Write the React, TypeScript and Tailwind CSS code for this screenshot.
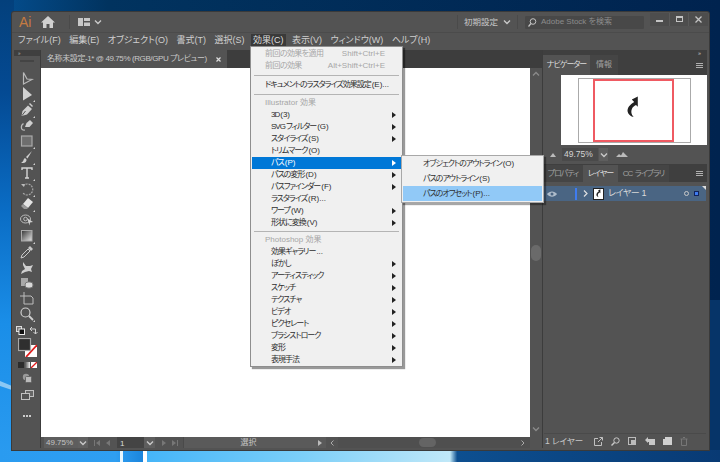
import type { ReactNode } from 'react';

const jp = 'font-["Liberation_Sans","Noto_Sans_CJK_JP",sans-serif] [font-feature-settings:"palt"]';

type MenuRow =
  | { kind: 'sep'; h: string }
  | { kind: 'head'; label: string }
  | { kind: 'dim'; label: string; right: string }
  | { kind: 'item'; label: string; sub?: boolean; on?: boolean; indent?: boolean };

const effectMenu: MenuRow[] = [
  { kind: 'dim', label: '前回の効果を適用', right: 'Shift+Ctrl+E' },
  { kind: 'dim', label: '前回の効果', right: 'Alt+Shift+Ctrl+E' },
  { kind: 'sep', h: 'h-[7px]' },
  { kind: 'item', label: 'ドキュメントのラスタライズ効果設定(E)...' },
  { kind: 'sep', h: 'h-[6px]' },
  { kind: 'head', label: 'Illustrator 効果' },
  { kind: 'item', indent: true, sub: true, label: '3D(3)' },
  { kind: 'item', indent: true, sub: true, label: 'SVG フィルター(G)' },
  { kind: 'item', indent: true, sub: true, label: 'スタイライズ(S)' },
  { kind: 'item', indent: true, label: 'トリムマーク(O)' },
  { kind: 'item', indent: true, sub: true, on: true, label: 'パス(P)' },
  { kind: 'item', indent: true, sub: true, label: 'パスの変形(D)' },
  { kind: 'item', indent: true, sub: true, label: 'パスファインダー(F)' },
  { kind: 'item', indent: true, label: 'ラスタライズ(R)...' },
  { kind: 'item', indent: true, sub: true, label: 'ワープ(W)' },
  { kind: 'item', indent: true, sub: true, label: '形状に変換(V)' },
  { kind: 'sep', h: 'h-[5px]' },
  { kind: 'head', label: 'Photoshop 効果' },
  { kind: 'item', indent: true, label: '効果ギャラリー...' },
  { kind: 'item', indent: true, sub: true, label: 'ぼかし' },
  { kind: 'item', indent: true, sub: true, label: 'アーティスティック' },
  { kind: 'item', indent: true, sub: true, label: 'スケッチ' },
  { kind: 'item', indent: true, sub: true, label: 'テクスチャ' },
  { kind: 'item', indent: true, sub: true, label: 'ビデオ' },
  { kind: 'item', indent: true, sub: true, label: 'ピクセレート' },
  { kind: 'item', indent: true, sub: true, label: 'ブラシストローク' },
  { kind: 'item', indent: true, sub: true, label: '変形' },
  { kind: 'item', indent: true, sub: true, label: '表現手法' },
];

const menuBar = ['ファイル(F)', '編集(E)', 'オブジェクト(O)', '書式(T)', '選択(S)', '効果(C)', '表示(V)', 'ウィンドウ(W)', 'ヘルプ(H)'];

// kana run tight, the "(X)..." suffix keeps normal spacing
function MenuLabel({ text }: { text: string }) {
  const m = text.match(/^(.*?)((?:\([^)]*\))?(?:\.\.\.)?)$/);
  return (
    <span>
      <span className="tracking-[-1px]">{m ? m[1] : text}</span>
      {m && m[2] ? <span className="ml-[1px]">{m[2]}</span> : null}
    </span>
  );
}

function Glyph({ children, w = 16, h = 16 }: { children: ReactNode; w?: number; h?: number }) {
  return (
    <svg width={w} height={h} viewBox={`0 0 ${w} ${h}`} fill="none" className="block shrink-0">
      {children}
    </svg>
  );
}

function Chevron({ color = '#c8c8c8' }: { color?: string }) {
  return (
    <Glyph w={8} h={6}>
      <path d="M1 1.500 4 4.500 7 1.500" stroke={color} strokeWidth="1.400" />
    </Glyph>
  );
}

const flyout = <path d="M16 14v2h-2z" fill="#d0d0d0" />;

const toolIcons: { h: string; icon: ReactNode }[] = [
  { h: 'h-[16px]', icon: <path d="M4.500 2.500V14L13 9.500 8 9z" stroke="#b8b8b8" strokeWidth="1.200" /> },
  { h: 'h-[16px]', icon: <g><path d="M4 1v13.500L13 9z" fill="#d2d2d2" />{flyout}</g> },
  { h: 'h-[15px]', icon: <g><path d="M2.500 14l1-5L9 3.500l4 3.500-5 5.500z" fill="#cfcfcf" /><path d="M3 13.500 6.500 9" stroke="#535353" /><path d="M10 2l1-1 3 3-1 1z" fill="#cfcfcf" />{flyout}</g> },
  { h: 'h-[16px]', icon: <g><path d="M6 10l1.500-4L11 3l3 3-3.500 4z" fill="#cfcfcf" /><path d="M6 13C2 14 1 9 4.500 6.500" stroke="#bbb" strokeWidth="1.200" /></g> },
  { h: 'h-[16px]', icon: <g><rect x="2.500" y="3" width="10.500" height="10" fill="#6e6e6e" stroke="#a8a8a8" strokeWidth="1.200" />{flyout}</g> },
  { h: 'h-[16px]', icon: <g><path d="M13 2 7 8l1.500 1.500z" fill="#d0d0d0" /><path d="M6 9C4 10 5 13 2 13.500 5 15 8 13 7.500 10.500z" fill="#d0d0d0" />{flyout}</g> },
  { h: 'h-[16px]', icon: <g><path d="M3 5V3h10v2M8 3v10M6 13h4" stroke="#d4d4d4" strokeWidth="1.400" />{flyout}</g> },
  { h: 'h-[15px]', icon: <g><path d="M4 5a5.500 5.500 0 1 1 0 7" stroke="#a8a8a8" strokeWidth="1.200" strokeDasharray="2 1" /><path d="M2 3l4 0-1 3z" fill="#bbb" />{flyout}</g> },
  { h: 'h-[16px]', icon: <g><path d="M9 2l5 4-5 6-5-4z" fill="#e4e4e4" /><path d="M4 8l-2 2 3 3h3l1-1z" fill="#9a9a9a" />{flyout}</g> },
  { h: 'h-[16px]', icon: <g><ellipse cx="6.500" cy="7" rx="5" ry="4" stroke="#bbb" /><circle cx="6.500" cy="7" r="1.800" stroke="#bbb" /><path d="M8 6l6 4-3 .5-.5 3z" fill="#d0d0d0" /></g> },
  { h: 'h-[16px]', icon: <g><rect x="2.500" y="2.500" width="10.500" height="10.500" fill="url(#toolGrad)" stroke="#aaa" />{flyout}</g> },
  { h: 'h-[16px]', icon: <g><path d="M2 14l1-3 6-6 2 2-6 6z" stroke="#c8c8c8" /><path d="M9 4l2-2 3 3-2 2z" fill="#c8c8c8" /></g> },
  { h: 'h-[15px]', icon: <path d="M4 2l3 4 4 0 3-1-2 4 1 3-3-1-4 1-4 2 1-3 3-2-2-4z" fill="#cfcfcf" /> },
  { h: 'h-[16px]', icon: <g><rect x="2" y="3" width="7" height="8" fill="#a8a8a8" /><rect x="6" y="7" width="8" height="6" rx="3" fill="#d8d8d8" stroke="#777" /></g> },
  { h: 'h-[15px]', icon: <path d="M5 1v4H1M5 5h7l2 2v6H5z" stroke="#bdbdbd" /> },
  { h: 'h-[16px]', icon: <g><circle cx="6.500" cy="6.500" r="4.500" stroke="#d0d0d0" strokeWidth="1.200" /><path d="M10 10l4 4" stroke="#d0d0d0" strokeWidth="1.800" />{flyout}</g> },
];

function ToolPanel() {
  return (
    <div className="flex h-full w-[27px] shrink-0 flex-col items-center border-r border-[#3c3c3c] bg-[#535353]">
      <div className="flex h-[6px] w-full items-center bg-[#3f3f3f] pl-[4px] text-[5px] leading-none text-[#bbb]">»</div>
      <div className="mt-[4px] h-[2px] w-[14px] bg-[#444]" />
      <svg width="0" height="0" className="absolute">
        <defs>
          <linearGradient id="toolGrad" x1="0" x2="1" y1="0" y2="1">
            <stop offset="0" stopColor="#333" />
            <stop offset="1" stopColor="#e8e8e8" />
          </linearGradient>
        </defs>
      </svg>
      <div className="mt-[8px] flex flex-col items-center">
        {toolIcons.map((t, i) => (
          <div key={i} className={`${t.h} flex w-full items-center justify-center`}>
            <Glyph>{t.icon}</Glyph>
          </div>
        ))}
      </div>
      <div className="mt-[3px] flex h-[10px] w-full items-center justify-center gap-[4px]">
        <Glyph w={9} h={9}>
          <rect x="0.500" y="0.500" width="5" height="5" fill="#777" stroke="#ddd" />
          <rect x="3" y="3" width="5.500" height="5.500" fill="#111" stroke="#eee" />
        </Glyph>
        <Glyph w={9} h={9}>
          <path d="M1 3h5.500v5M1 3l2-2M1 3l2 2M6.500 8l-2-2M6.500 8l2-2" stroke="#d0d0d0" />
        </Glyph>
      </div>
      <div className="relative mt-[3px] h-[19px] w-[19px] shrink-0">
        <svg width="19" height="19" viewBox="0 0 19 19" className="block">
          <rect x="7" y="7" width="12" height="12" fill="#fff" />
          <path d="M8 19 19 7" stroke="#e21b1b" strokeWidth="1.800" />
          <rect x="0.500" y="0.500" width="12" height="12" fill="#2f2f2f" stroke="#a8a8a8" strokeWidth="1.200" />
        </svg>
      </div>
      <div className="mt-[5px] flex h-[6px] items-center gap-[1px]">
        <span className="h-[6px] w-[6px] bg-[#2c2c2c]" />
        <span className="h-[6px] w-[5px] bg-gradient-to-r from-[#555] to-[#eee]" />
        <svg width="6" height="6" viewBox="0 0 6 6" className="block">
          <rect width="6" height="6" fill="#fff" />
          <path d="M0 6 6 0" stroke="#e21b1b" strokeWidth="1.300" />
        </svg>
      </div>
      <div className="mt-[5px]">
        <Glyph w={10} h={10}>
          <circle cx="4" cy="4" r="3.200" fill="#999" />
          <rect x="3.500" y="3.500" width="6" height="6" rx="1" fill="#bbb" stroke="#666" />
        </Glyph>
      </div>
      <div className="mt-[7px]">
        <Glyph w={13} h={10}>
          <rect x="4.500" y="0.500" width="8" height="6" stroke="#c0c0c0" fill="#666" />
          <rect x="0.500" y="3.500" width="8" height="6" stroke="#c0c0c0" fill="#535353" />
        </Glyph>
      </div>
      <div className="mt-[15px] flex gap-[1px]">
        <span className="h-[2px] w-[2px] bg-[#ccc]" />
        <span className="h-[2px] w-[2px] bg-[#ccc]" />
        <span className="h-[2px] w-[2px] bg-[#ccc]" />
      </div>
    </div>
  );
}

function NavArrows({ flip }: { flip?: boolean }) {
  return (
    <svg width="17" height="6" viewBox="0 0 17 6" className={`block ${flip ? 'rotate-180' : ''}`}>
      <path d="M0 0h1v6H0zM6 0v6L2 3zM16 0v6l-4-3z" fill="#777" />
    </svg>
  );
}

function StatusBar() {
  return (
    <div className={`flex h-[11px] shrink-0 items-stretch bg-[#535353] text-[8px] leading-[11px] text-[#c4c4c4] ${jp}`}>
      <div className="ml-[3px] w-[34px] bg-[#5e5e5e] pl-[2px]">49.75%</div>
      <div className="flex w-[10px] items-center justify-center bg-[#606060]">
        <Chevron />
      </div>
      <div className="flex w-[29px] items-center justify-center">
        <NavArrows />
      </div>
      <div className="w-[27px] bg-[#444] pl-[3px] pt-[1px] text-[#ddd]">1</div>
      <div className="flex w-[11px] items-center justify-center bg-[#5e5e5e]">
        <Chevron />
      </div>
      <div className="flex w-[28px] items-center justify-center">
        <NavArrows flip />
      </div>
      <div className="w-[130px] border-l border-[#4a4a4a] bg-[#5a5a5a] text-center">選択</div>
      <div className="flex w-[13px] items-center justify-center bg-[#5a5a5a]">
        <svg width="4" height="6" viewBox="0 0 4 6" className="block">
          <path d="M0 0 4 3 0 6z" fill="#bbb" />
        </svg>
      </div>
      <div className="flex w-[12px] items-center justify-center">
        <svg width="4" height="6" viewBox="0 0 4 6" className="block">
          <path d="M3.500.5 1 3l2.500 2.500" stroke="#aaa" fill="none" />
        </svg>
      </div>
      <div className="relative flex-1 bg-[#4f4f4f]">
        <div className="absolute left-[81px] top-[1px] h-[9px] w-[17px] rounded-full bg-[#646464]" />
        <svg width="4" height="6" viewBox="0 0 4 6" className="absolute right-[5px] top-[3px] block">
          <path d="M.5.5 3 3 .5 5.500" stroke="#aaa" fill="none" />
        </svg>
      </div>
    </div>
  );
}

function DocColumn() {
  return (
    <div className="flex min-w-0 flex-1 flex-col">
      <div className="flex h-[18px] shrink-0 bg-[#3d3d3d]">
        <div className={`flex w-[186px] items-center justify-between bg-[#535353] pl-[6px] pr-[4px] text-[8px] tracking-[-0.4px] text-[#c9c9c9] ${jp}`}>
          <span className="whitespace-nowrap">名称未設定-1* @ 49.75% (RGB/GPU プレビュー)</span>
          <svg width="5" height="5" viewBox="0 0 5 5" className="mr-[2px] block">
            <path d="M.5.5l4 4M4.500.5l-4 4" stroke="#ddd" strokeWidth="1.200" />
          </svg>
        </div>
      </div>
      <div className="flex min-h-0 flex-1">
        <div className="flex min-w-0 flex-1 flex-col">
          <div className="flex-1 bg-white" />
          <StatusBar />
        </div>
        <div className="flex w-[12px] shrink-0 flex-col items-center bg-[#535353] pb-[16px] pt-[3px]">
          <div className="rotate-180">
            <Chevron color="#8a8a8a" />
          </div>
          <div className="mt-[168px] h-[16px] w-[10px] rounded-[5px] bg-[#6a6a6a]" />
          <div className="mt-auto">
            <Chevron color="#8a8a8a" />
          </div>
        </div>
      </div>
    </div>
  );
}

function PanelTab({ label, w, on, tight }: { label: string; w: string; on?: boolean; tight?: boolean }) {
  return (
    <div className={`flex items-center justify-center whitespace-pre ${w} ${tight ? 'tracking-[-1px]' : ''} ${on ? 'bg-[#535353] text-[#dcdcdc]' : 'bg-[#454545] text-[#a0a0a0]'}`}>{label}</div>
  );
}

function PanelMenu() {
  return (
    <div className="ml-auto mr-[2px] flex h-full w-[12px] flex-col items-center justify-center gap-[1px]">
      <span className="h-[1px] w-[7px] bg-[#b0b0b0]" />
      <span className="h-[1px] w-[7px] bg-[#b0b0b0]" />
      <span className="h-[1px] w-[7px] bg-[#b0b0b0]" />
    </div>
  );
}

function CurveArrow({ size }: { size: number }) {
  return (
    <svg width={size} height={size * 1.2} viewBox="0 0 15 18" className="block">
      <path d="M11.500 .5 6.500 3 8.500 5C5 7 2.500 10 3 13c.3 2 2 4 5 4.500C6 15 5.700 13 6.500 11c.5-1.500 2-3 3.500-3.500L11.500 9z" fill="#222" />
    </svg>
  );
}

function Navigator() {
  return (
    <>
      <div className={`flex h-[20px] shrink-0 bg-[#3f3f3f] text-[8px] ${jp}`}>
        <PanelTab on tight w="w-[47px]" label="ナビゲーター" />
        <PanelTab w="w-[28px]" label="情報" />
        <PanelMenu />
      </div>
      <div className="ml-[18px] flex h-[70px] shrink-0 justify-center bg-white pb-[2px] pt-[3px]">
        <div className="w-[113px] border border-[#aaa] pl-[14px]">
          <div className="flex h-full w-[81px] items-center justify-center border-2 border-[#ef5a62] pb-[8px]">
            <CurveArrow size={18} />
          </div>
        </div>
      </div>
      <div className={`flex h-[20px] shrink-0 items-center border-b border-[#3f3f3f] text-[8.500px] text-[#d4d4d4] ${jp}`}>
        <svg width="6" height="4" viewBox="0 0 6 4" className="ml-[7px] block">
          <path d="M0 4 3 0 6 4z" fill="#bbb" />
        </svg>
        <div className="ml-[6px] flex h-[13px] w-[36px] items-center bg-[#4a4a4a] pl-[2px]">49.75%</div>
        <div className="ml-[1px] flex h-[13px] w-[9px] items-center justify-center bg-[#5e5e5e]">
          <Chevron />
        </div>
        <svg width="12" height="5" viewBox="0 0 12 5" className="ml-[8px] block">
          <path d="M0 5 3 2 5 3.500 7 0 12 5z" fill="#bbb" />
        </svg>
      </div>
    </>
  );
}

function LayersPanel() {
  return (
    <div className="flex min-h-0 flex-1 flex-col">
      <div className={`flex h-[17px] shrink-0 bg-[#3f3f3f] text-[8px] ${jp}`}>
        <PanelTab tight w="w-[40px]" label="プロパティ" />
        <PanelTab on tight w="w-[35px]" label="レイヤー" />
        <PanelTab tight w="w-[51px]" label="CC  ライブラリ" />
        <PanelMenu />
      </div>
      <div className="mx-[1px] mt-[4px] flex min-h-0 flex-1 flex-col border-b border-[#4a4a4a]">
        <div className={`relative flex h-[15px] shrink-0 items-center bg-[#4a6583] text-[9px] tracking-[-0.4px] text-[#d8d8d8] ${jp}`}>
          <svg width="10" height="6" viewBox="0 0 10 6" className="ml-[3px] block">
            <path d="M0 3C2.500-.5 7.500-.5 10 3 7.500 6.500 2.500 6.500 0 3z" fill="#aebccb" />
            <circle cx="5" cy="3" r="1.500" fill="#4a6583" />
          </svg>
          <span className="ml-[18px] h-[12px] w-[2px] bg-[#3f7cf0]" />
          <svg width="5" height="7" viewBox="0 0 5 7" className="ml-[6px] block">
            <path d="M1 .5 4 3.500 1 6.500" stroke="#e0e0e0" strokeWidth="1.200" fill="none" />
          </svg>
          <div className="ml-[5px] flex h-[12px] w-[11px] items-center justify-center border border-[#222] bg-white">
            <CurveArrow size={7} />
          </div>
          <span className="ml-[4px]">レイヤー 1</span>
          <span className="ml-auto h-[5px] w-[5px] rounded-full border border-[#c8c8c8]" />
          <span className="ml-[5px] mr-[7px] h-[5px] w-[5px] border border-[#13245c] bg-[#3f7cf0]" />
          <span className="absolute right-0 top-0 h-0 w-0 border-l-[4px] border-t-[4px] border-l-transparent border-t-[#ddd]" />
        </div>
      </div>
      <div className={`flex h-[14px] shrink-0 items-center text-[8.500px] text-[#c8c8c8] ${jp}`}>
        <span className="ml-[2px] w-[49px] whitespace-nowrap">1 レイヤー</span>
        <div className="flex items-center gap-[8px]">
          <Glyph w={9} h={9}>
            <path d="M4 1.500H.5V8.500H7.500V5M4 5 8.500.5M5.500.5h3v3" stroke="#c0c0c0" />
          </Glyph>
          <Glyph w={9} h={9}>
            <circle cx="5.500" cy="3.500" r="2.700" stroke="#c8c8c8" />
            <path d="M3.500 5.500.5 8.500" stroke="#c8c8c8" strokeWidth="1.400" />
          </Glyph>
          <Glyph w={9} h={9}>
            <rect x=".5" y=".5" width="7" height="7" stroke="#bbb" />
            <rect x="3" y="3" width="4" height="4" fill="#bbb" />
          </Glyph>
          <Glyph w={10} h={9}>
            <path d="M0 3 3 0v2h7v6H4V5H3v1z" fill="#c8c8c8" />
          </Glyph>
          <Glyph w={9} h={9}>
            <path d="M0 2h2V0h7v8H0z" fill="#d0d0d0" />
          </Glyph>
          <Glyph w={8} h={9}>
            <path d="M.5 2h7M1.500 2v6.500h5V2M3 .5h2" stroke="#777" />
          </Glyph>
        </div>
      </div>
    </div>
  );
}

function RightPanels() {
  return (
    <div className="flex w-[165px] shrink-0 flex-col border-l border-[#3c3c3c] bg-[#535353]">
      <div className="flex h-[5px] shrink-0 items-center justify-end bg-[#3f3f3f] pr-[6px] text-[6px] leading-none text-[#ccc]">»</div>
      <Navigator />
      <LayersPanel />
    </div>
  );
}

function EffectMenu() {
  return (
    <div className={`absolute left-[238px] top-[34px] z-10 w-[153px] border border-[#8e8e8e] bg-[#f0f0f0] px-[1px] pt-[1px] text-[8px] leading-[12px] text-[#2e2e2e] shadow-[2px_2px_1px_rgba(0,0,0,0.4)] ${jp}`}>
      {effectMenu.map((row, i) => {
        if (row.kind === 'sep') {
          return (
            <div key={i} className={`flex ${row.h} items-center px-[2px]`}>
              <div className="h-[1px] w-full bg-[#b4b4b4]" />
            </div>
          );
        }
        if (row.kind === 'head') {
          return (
            <div key={i} className="h-[12px] pl-[13px] text-[#a6a6a6]">
              {row.label}
            </div>
          );
        }
        if (row.kind === 'dim') {
          return (
            <div key={i} className="flex h-[12px] justify-between pl-[13px] pr-[16px] text-[#a6a6a6]">
              <span className="tracking-[-0.6px]">{row.label}</span>
              <span>{row.right}</span>
            </div>
          );
        }
        return (
          <div
            key={i}
            className={`flex h-[12px] items-center justify-between whitespace-nowrap pr-[5px] ${row.indent ? 'pl-[19px]' : 'pl-[13px]'} ${row.on ? 'bg-[#0078d7] text-white' : ''}`}
          >
            <MenuLabel text={row.label} />
            {row.sub && (
              <svg width="4" height="6" viewBox="0 0 4 6" className="block">
                <path d="M0 0 4 3 0 6z" fill={row.on ? '#fff' : '#222'} />
              </svg>
            )}
          </div>
        );
      })}
    </div>
  );
}

function PathSubmenu() {
  const rows = ['オブジェクトのアウトライン(O)', 'パスのアウトライン(S)', 'パスのオフセット(P)...'];
  return (
    <div className={`absolute left-[389px] top-[143px] z-20 w-[143px] border border-[#a8a8a8] bg-[#f0f0f0] p-[1px] text-[8px] text-[#2e2e2e] shadow-[2px_2px_1px_rgba(0,0,0,0.35)] ${jp}`}>
      {rows.map((label, i) => (
        <div key={label} className={`flex h-[14.700px] items-center whitespace-nowrap pl-[20px] ${i === 2 ? 'bg-[#91c9f7]' : ''}`}>
          <MenuLabel text={label} />
        </div>
      ))}
    </div>
  );
}

export default function App() {
  return (
    <div className="relative h-[462px] w-[720px] overflow-hidden bg-[#00234f]">
      {/* wallpaper */}
      <svg width="720" height="462" viewBox="0 0 720 462" className="absolute inset-0 block">
        <defs>
          <linearGradient id="wallLeft" x1="0" x2="0" y1="0" y2="1">
            <stop offset="0" stopColor="#03407c" />
            <stop offset="0.2" stopColor="#044a93" />
            <stop offset="0.45" stopColor="#0a6cc4" />
            <stop offset="0.7" stopColor="#1a8ee8" />
            <stop offset="1" stopColor="#2a9bf0" />
          </linearGradient>
          <linearGradient id="wallBottom" x1="0" x2="1" y1="0" y2="0">
            <stop offset="0" stopColor="#2a9bf0" />
            <stop offset="0.16" stopColor="#2f9ff2" />
            <stop offset="0.2" stopColor="#1a84dc" />
            <stop offset="0.205" stopColor="#45b5f8" />
            <stop offset="0.42" stopColor="#7ccff8" />
            <stop offset="0.625" stopColor="#c0e8f8" />
            <stop offset="0.635" stopColor="#0d4f90" />
            <stop offset="1" stopColor="#083a74" />
          </linearGradient>
          <linearGradient id="wallTop" x1="0" x2="1" y1="0" y2="0">
            <stop offset="0" stopColor="#044e8f" />
            <stop offset="0.15" stopColor="#01335f" />
            <stop offset="1" stopColor="#00234f" />
          </linearGradient>
        </defs>
        <rect width="720" height="462" fill="url(#wallTop)" />
        <rect width="14" height="462" fill="url(#wallLeft)" />
        <rect x="709" y="300" width="11" height="162" fill="#063468" />
        <rect y="450" width="720" height="12" fill="url(#wallBottom)" />
        <rect x="120" y="450" width="3" height="12" fill="#e8f6fe" />
        <rect x="143" y="450" width="4" height="12" fill="#fff" />
        <path d="M0 381 12 386V390L0 386z" fill="#8cc8f4" />
      </svg>

      <div className="absolute left-[12px] top-[12px] flex h-[438px] w-[697px] flex-col overflow-hidden rounded-t-[2px] bg-[#535353] shadow-[0_0_0_1px_#3a3a3a]">
        {/* title bar */}
        <div className={`relative flex h-[20px] shrink-0 items-center text-[8.500px] text-[#c8c8c8] ${jp}`}>
          <span className='ml-[7px] w-[14px] font-["Liberation_Sans",sans-serif] text-[14px] leading-none text-[#c57b42]'>Ai</span>
          <svg width="14" height="12" viewBox="0 0 14 12" className="ml-[8px] block">
            <path d="M7 0 14 6.500H12V12H8.500V8h-3v4H2V6.500H0z" fill="#d0d0d0" />
          </svg>
          <span className="ml-[14px] h-[14px] w-[1px] bg-[#4a4a4a]" />
          <svg width="12" height="8" viewBox="0 0 12 8" className="ml-[8px] block">
            <path d="M0 0h5v8H0zM6 0h6v3H6zM6 4.500h6V8H6z" fill="#c8c8c8" />
          </svg>
          <div className="ml-[4px]">
            <Chevron />
          </div>
          <span className="ml-auto h-[14px] w-[1px] bg-[#4a4a4a]" />
          <span className="ml-[6px] whitespace-nowrap">初期設定</span>
          <div className="ml-[5px]">
            <Chevron />
          </div>
          <span className="ml-[6px] h-[14px] w-[1px] bg-[#4a4a4a]" />
          <div className="ml-[7px] flex h-[13px] w-[119px] items-center gap-[2px] rounded-[1px] bg-[#484848] pl-[3px] text-[8px] text-[#8c8c8c]">
            <svg width="11" height="9" viewBox="0 0 11 9" className="block">
              <circle cx="5" cy="3.500" r="2.800" stroke="#c4c4c4" fill="none" />
              <path d="M3 5.500 .5 8.500" stroke="#c4c4c4" strokeWidth="1.200" />
            </svg>
            <span className="whitespace-nowrap">Adobe Stock を検索</span>
          </div>
          <div className="ml-[6px] mr-[1px] flex h-[13px] w-[58px] -translate-y-[3px] self-center bg-[#4d4d4d]">
            <div className="flex flex-1 items-center justify-center">
              <span className="mt-[3px] h-[2px] w-[7px] bg-[#c4c4c4]" />
            </div>
            <div className="flex flex-1 items-center justify-center border-x border-[#5a5a5a]">
              <span className="h-[6px] w-[7px] border border-t-2 border-[#c4c4c4]" />
            </div>
            <div className="flex flex-1 items-center justify-center">
              <svg width="7" height="7" viewBox="0 0 7 7" className="block">
                <path d="M.5.5l6 6M6.500.5l-6 6" stroke="#c4c4c4" strokeWidth="1.300" />
              </svg>
            </div>
          </div>
        </div>

        {/* menu bar */}
        <div className={`flex h-[17px] shrink-0 items-center gap-[4.500px] border-t border-[#4b4b4b] pl-[4px] text-[9px] text-[#cfcfcf] ${jp}`}>
          {menuBar.map((m) => (
            <span key={m} className={`flex h-[15px] items-center whitespace-nowrap px-[2px] ${m === '効果(C)' ? 'bg-[#3a3a3a] text-[#dcdcdc]' : ''}`}>
              {m}
            </span>
          ))}
        </div>

        {/* work area */}
        <div className="flex min-h-0 flex-1 pb-[2px] pl-[2px] pr-[2px] pt-[1px]">
          <ToolPanel />
          <DocColumn />
          <RightPanels />
        </div>

        <EffectMenu />
        <PathSubmenu />
      </div>
    </div>
  );
}
